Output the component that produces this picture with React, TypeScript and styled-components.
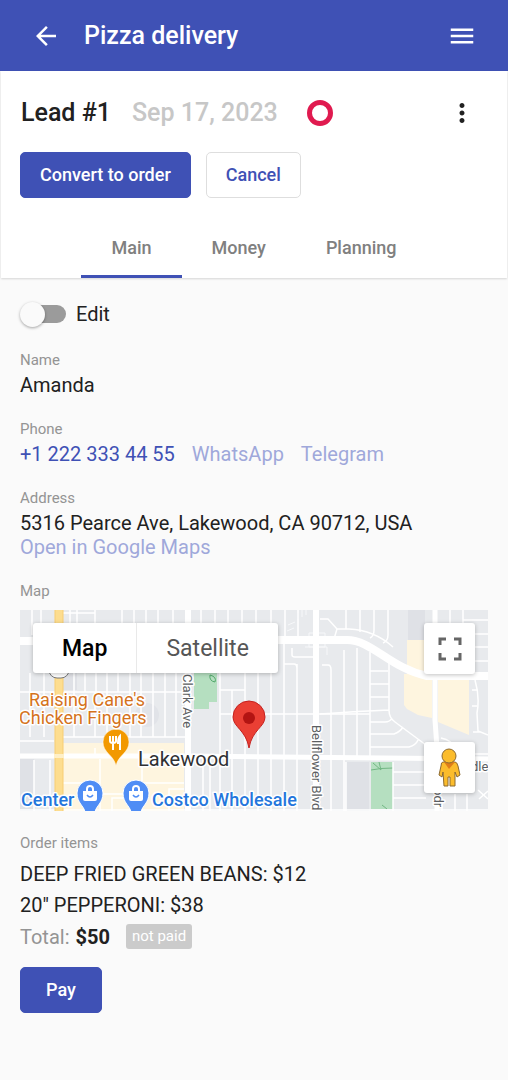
import React, { useState } from "react";
import styled, { createGlobalStyle } from "styled-components";
import { MdArrowBack, MdMenu, MdMoreVert } from "react-icons/md";

const indigo = "#3f51b5";

const GlobalStyle = createGlobalStyle`
  * { box-sizing: border-box; }
  body {
    margin: 0;
    background: #fafafa;
    color: #212121;
    font: 400 20px/24px Roboto, sans-serif;
  }
  button, input { font: inherit; }
`;

const AppBar = styled.header`
  display: flex;
  align-items: center;
  height: 71px;
  padding: 0 31px;
  gap: 23px;
  background: ${indigo};
  color: #fff;
`;

const AppTitle = styled.h1`
  flex: 1;
  margin: 0;
  font-size: 25px;
  line-height: 32px;
  font-weight: 500;
`;

const IconButton = styled.button`
  display: flex;
  padding: 0;
  border: 0;
  background: none;
  color: inherit;
  cursor: pointer;
`;

const LeadPanel = styled.section`
  margin: 0 1px;
  padding-top: 26px;
  background: #fff;
  box-shadow: 0 1px 2px rgba(0, 0, 0, 0.15);
`;

const LeadHeading = styled.div`
  display: flex;
  align-items: center;
  padding: 0 30px 0 20px;
`;

const LeadTitle = styled.h2`
  margin: 0 21px 0 0;
  font-size: 25px;
  line-height: 32px;
  font-weight: 500;
`;

const LeadDate = styled.time`
  font-size: 25px;
  line-height: 32px;
  font-weight: 500;
  color: #c7c7c7;
`;

const StatusRing = styled.span`
  width: 26px;
  height: 26px;
  margin: 0 auto 0 29px;
  border: 5px solid #e01a4f;
  border-radius: 50%;
`;

const Actions = styled.div`
  display: flex;
  gap: 15px;
  padding: 23px 19px 0;
`;

const Button = styled.button<{ $outlined?: boolean; $wide?: boolean }>`
  height: 46px;
  padding: 0 ${(p) => (p.$wide ? 25 : 19)}px 1px;
  border: 1px solid ${(p) => (p.$outlined ? "#dedede" : indigo)};
  border-radius: 5px;
  background: ${(p) => (p.$outlined ? "#fff" : indigo)};
  color: ${(p) => (p.$outlined ? indigo : "#fff")};
  font-size: 18px;
  font-weight: 500;
  cursor: pointer;
`;

const Tabs = styled.div`
  display: flex;
  justify-content: center;
  margin-top: 19px;
`;

const Tab = styled.button<{ $active: boolean }>`
  height: 61px;
  padding: 3px 30px 0;
  border: 0;
  border-bottom: 3px solid ${(p) => (p.$active ? indigo : "transparent")};
  background: none;
  color: #808080;
  font-size: 18px;
  font-weight: 500;
  cursor: pointer;
`;

const Content = styled.main`
  padding: 21px 20px 66px;
`;

const SwitchLabel = styled.label`
  display: flex;
  align-items: center;
  gap: 10px;
  height: 30px;
  margin-bottom: 21px;
  cursor: pointer;
`;

const Switch = styled.input`
  appearance: none;
  display: flex;
  align-items: center;
  width: 36px;
  height: 18px;
  margin: 0 0 0 10px;
  border-radius: 9px;
  background: #9b9b9b;
  cursor: pointer;

  &::before {
    content: "";
    flex: none;
    width: 25px;
    height: 25px;
    margin-left: -10px;
    border-radius: 50%;
    background: #fafafa;
    box-shadow: 0 1px 3px rgba(0, 0, 0, 0.35);
  }
  &:checked { background: #9fa8da; }
  &:checked::before { margin-left: 18px; background: ${indigo}; }
`;

const Field = styled.section`
  margin-bottom: 22px;
`;

const FieldLabel = styled.h3<{ $gap?: number }>`
  margin: 0 0 ${(p) => p.$gap ?? 3}px;
  color: #949494;
  font-size: 15px;
  line-height: 20px;
  font-weight: 400;
`;

const Links = styled.div`
  display: flex;
  flex-wrap: wrap;
  gap: 0 17px;
`;

const Link = styled.a<{ $soft?: boolean }>`
  color: ${(p) => (p.$soft ? "#9fa8da" : indigo)};
  text-decoration: none;
`;

const MapFrame = styled.div`
  position: relative;
  height: 201px;
  overflow: hidden;
  background: #e8eaed;
`;

const MapArt = styled.svg`
  display: block;
  width: 100%;
  height: 100%;
  font-family: Roboto, sans-serif;
`;

const MapTypes = styled.div`
  position: absolute;
  top: 13px;
  left: 13px;
  display: flex;
  border-radius: 3px;
  background: #fff;
  box-shadow: 0 1px 4px rgba(0, 0, 0, 0.25);
`;

const MapType = styled.button<{ $active?: boolean }>`
  height: 50px;
  padding: 2px 29px 0;
  border: 0;
  background: none;
  color: ${(p) => (p.$active ? "#000" : "#565656")};
  font-size: 23px;
  font-weight: ${(p) => (p.$active ? 500 : 400)};
  cursor: pointer;

  & + & { border-left: 1px solid #e9e9e9; }
`;

const MapTools = styled.div`
  position: absolute;
  top: 13px;
  right: 13px;
  display: flex;
  flex-direction: column;
  gap: 68px;
`;

const MapTool = styled.button`
  display: flex;
  align-items: center;
  justify-content: center;
  width: 51px;
  height: 51px;
  padding: 0;
  border: 0;
  border-radius: 3px;
  background: #fff;
  box-shadow: 0 1px 4px rgba(0, 0, 0, 0.25);
  cursor: pointer;
`;

const Items = styled.ul`
  margin: 0;
  padding: 0;
  list-style: none;
  line-height: 31px;
`;

const Total = styled.div`
  display: flex;
  align-items: center;
  height: 31px;
  margin-bottom: 15px;
  color: #949494;
`;

const Amount = styled.strong`
  margin: 0 16px 0 6px;
  color: #212121;
  font-weight: 700;
`;

const Badge = styled.span`
  height: 25px;
  padding: 0 6px;
  border-radius: 3px;
  background: #cbcbcb;
  color: #fff;
  font-size: 15px;
  line-height: 25px;
`;

function ShopPin({ x }: { x: number }) {
  return (
    <g transform={`translate(${x} 184)`}>
      <path d="M-5 18C-6 12-13 9-13-1A13 13 0 0 1 13-1C13 9 6 12 5 18Z" fill="#4f8df5" stroke="#fff" />
      <path d="M-7-3H7V5Q7 7 5 7H-5Q-7 7-7 5Z" fill="#fff" />
      <path d="M-3-3V-5A3 3 0 0 1 3-5V-3" fill="none" stroke="#fff" strokeWidth="2" />
      <path d="M-3 1Q0 5 3 1" fill="none" stroke="#4f8df5" strokeWidth="1.5" />
    </g>
  );
}

function StreetMap() {
  return (
    <MapArt viewBox="0 0 468 201" preserveAspectRatio="xMidYMid slice" role="img" aria-label="Street map of Lakewood">
      <rect width="468" height="201" fill="#e8eaed" />
      <path d="M388 0H405V30H388ZM326 152H349V201H326ZM43 59H57V80H43ZM0 149H14V201H0Z" fill="#dfe1e6" />
      <circle cx="127" cy="105" r="12" fill="#e1e3e8" />
      <path d="M43 133H164V201H43ZM387 30H412V108L398 105L387 99L384 95V64H387ZM418 70H449V125L418 112Z" fill="#fef5df" />
      <path d="M174 63H197V92H189V99H174ZM351 152H373V199H351Z" fill="#b5dfc0" />
      <path d="M351 160Q360 158 373 158M353 153L361 160L359 152M362 195L367 199" fill="none" stroke="#72b784" />
      <path d="M190 65Q197 67 195 72Q189 71 190 65Z" fill="none" stroke="#51a86a" />

      <g fill="none" stroke="#fff" strokeWidth="1.5">
        <path d="M12 0V25M21 0V25M50 0V25M57 0V25M75 0V25M43 3H75M10 63V127M24 63V127M54 63V82M65 63V82M76 63V82M87 63V82M98 63V82M110 63V127M121 63V127M133 63V127M145 63V127M156 63V127M0 82H168M43 127H168M75 82V127M54 82V127M87 82V127M0 131H34" />
        <path d="M102 0V25M114 0V25M126 0V25M138 0V25M153 0V25M181 0V30M195 0V30M208 0V30M222 0V30M236 0V30M251 0V30M265 0V30M278 0V30" />
        <path d="M200 63V201M212 80V201M225 63V201M238 63V201M251 63V201M264 30V201M277 54V201M200 80H225M200 104H350M264 54H274Q277 54 277 59M272 38V45Q272 47 275 47H293M183 149V201M190 149V201" />
        <path d="M302 55H308Q311 55 311 60V201M324 40V201M337 38V147M350 42V147M300 9H308L317 19L314 29M326 0V19M340 0V22M354 0V20Q354 26 350 28M368 0V25Q368 31 363 33M317 19H329Q354 20 373 37M300 104Q340 101 369 100M350 61H368M350 74H369M350 87H369M350 112H365Q370 112 372 108M350 124H374Q380 122 383 117M350 137H389Q396 135 398 130M369 50V100Q369 108 375 112L410 138" />
        <path d="M373 152V201M373 162H406M373 175H406M373 188H406M326 152V201M422 190V201M435 184V201M447 184V201M430 0V13M443 0V13M443 10H468M454 24H468M454 37H468M454 51H468M455 70Q460 87 457 103L458 121L468 125M453 122H460M421 128Q432 130 437 140M455 144H468M458 180L468 189M468 181L459 189M452 80H457M452 96H457" />
        <path d="M80 149V173H43M80 173V184H122M122 140V173H164M80 184V201M122 173V201M92 201V188H105M149 201V179H164M75 144V138M14 150V201M30 150V201" />
        <path d="M0 200H468" />
      </g>
      <path d="M289 23H305V37H289ZM285 37H307V45M294 23V45M268 15L275 12M267 21L274 18M278 3V9M282 0V7M286 0V5" fill="none" stroke="#f7f8fa" />

      <g fill="none" stroke="#fff">
        <path d="M0 146H164L468 149" strokeWidth="5" />
        <path d="M0 31H14" strokeWidth="8" />
        <path d="M168 0V201M296 0V201" strokeWidth="6" />
        <path d="M415 0V68V110L417 138V201" strokeWidth="5" />
        <path d="M257 30H327C352 30 370 58 407 66H468" strokeWidth="8" />
      </g>
      <path d="M39 0V201" fill="none" stroke="#f7cd72" strokeWidth="9" />
      <path d="M39 0V201" fill="none" stroke="#fddd8f" strokeWidth="7" />
      <path d="M34 146H44" fill="none" stroke="#fff0c8" strokeWidth="4" />
      <rect x="29" y="50" width="20" height="18" rx="8" fill="#fff" stroke="#777" />

      <g transform="translate(96 131)">
        <path d="M0 25C-2 14-13 12-13 1A13 13 0 0 1 13 1C13 12 2 14 0 25Z" fill="#f29900" stroke="#fff" strokeWidth=".5" />
        <path d="M-6-5V0Q-6 2-3 2Q0 2 0 0V-5M-3-5V9M4 9V-5Q2-3 2 2H4" fill="none" stroke="#fff" strokeWidth="2" />
      </g>
      <ShopPin x={70} />
      <ShopPin x={116} />

      <g stroke="#fff" strokeWidth="3" strokeLinejoin="round" paintOrder="stroke" fontSize="18">
        <g fill="#d5731c">
          <text x="9" y="96">Raising Cane's</text>
          <text x="-1" y="114">Chicken Fingers</text>
        </g>
        <text x="118" y="156" fontSize="20" fill="#303134">Lakewood</text>
        <g fill="#2476dc" fontWeight="500">
          <text x="1" y="196">Center</text>
          <text x="132" y="196">Costco Wholesale</text>
        </g>
        <g fill="#5b5e62" fontSize="13">
          <text transform="translate(163 64) rotate(90)">Clark Ave</text>
          <text transform="translate(292 115) rotate(90)">Bellflower Blvd</text>
          <text transform="translate(414 178) rotate(90)">odr</text>
          <text x="451" y="161">dle</text>
        </g>
      </g>

      <path d="M229 138C226 120 213 117 213 107A16 16 0 0 1 245 107C245 117 232 120 229 138Z" fill="#ea3f34" stroke="#c5221f" />
      <circle cx="229" cy="108" r="6" fill="#b31412" />
    </MapArt>
  );
}

function FullscreenIcon() {
  return (
    <svg width="24" height="24" viewBox="0 0 24 24" fill="none" stroke="#666" strokeWidth="3" aria-hidden="true">
      <path d="M2 8V2H8M16 2H22V8M22 16V22H16M8 22H2V16" />
    </svg>
  );
}

function PegmanIcon() {
  return (
    <svg width="23" height="40" viewBox="0 0 23 40" fill="#fbbc2c" stroke="#8c6a32" aria-hidden="true">
      <path d="M5 14H17Q19 14 20 18L22 27L19 29L17 24V38H12V29H10V38H6L5 24L4 29L1 27L3 18Q3 14 5 14Z" />
      <path d="M6 14H17L11 21Z" fill="#df7d19" stroke="none" />
      <circle cx="11" cy="8" r="7" />
    </svg>
  );
}

const tabs = ["Main", "Money", "Planning"];
const items = ["DEEP FRIED GREEN BEANS: $12", '20" PEPPERONI: $38'];

export default function App() {
  const [tab, setTab] = useState("Main");
  return (
    <>
      <GlobalStyle />
      <AppBar>
        <IconButton aria-label="Back"><MdArrowBack size={30} /></IconButton>
        <AppTitle>Pizza delivery</AppTitle>
        <IconButton aria-label="Menu"><MdMenu size={30} /></IconButton>
      </AppBar>
      <LeadPanel>
        <LeadHeading>
          <LeadTitle>Lead #1</LeadTitle>
          <LeadDate dateTime="2023-09-17">Sep 17, 2023</LeadDate>
          <StatusRing />
          <IconButton aria-label="More actions"><MdMoreVert size={30} /></IconButton>
        </LeadHeading>
        <Actions>
          <Button>Convert to order</Button>
          <Button $outlined>Cancel</Button>
        </Actions>
        <Tabs role="tablist">
          {tabs.map((name) => (
            <Tab key={name} role="tab" aria-selected={tab === name} $active={tab === name} onClick={() => setTab(name)}>
              {name}
            </Tab>
          ))}
        </Tabs>
      </LeadPanel>
      <Content>
        <SwitchLabel>
          <Switch type="checkbox" role="switch" />
          Edit
        </SwitchLabel>
        <Field>
          <FieldLabel>Name</FieldLabel>
          <div>Amanda</div>
        </Field>
        <Field>
          <FieldLabel>Phone</FieldLabel>
          <Links>
            <Link href="tel:+12223334455">+1 222 333 44 55</Link>
            <Link $soft href="#whatsapp">WhatsApp</Link>
            <Link $soft href="#telegram">Telegram</Link>
          </Links>
        </Field>
        <Field>
          <FieldLabel>Address</FieldLabel>
          <div>5316 Pearce Ave, Lakewood, CA 90712, USA</div>
          <Links>
            <Link $soft href="#map">Open in Google Maps</Link>
          </Links>
        </Field>
        <Field id="map">
          <FieldLabel $gap={9}>Map</FieldLabel>
          <MapFrame>
            <StreetMap />
            <MapTypes>
              <MapType $active>Map</MapType>
              <MapType>Satellite</MapType>
            </MapTypes>
            <MapTools>
              <MapTool aria-label="Toggle fullscreen"><FullscreenIcon /></MapTool>
              <MapTool aria-label="Street view"><PegmanIcon /></MapTool>
            </MapTools>
          </MapFrame>
        </Field>
        <section>
          <FieldLabel $gap={6}>Order items</FieldLabel>
          <Items>
            {items.map((item) => <li key={item}>{item}</li>)}
          </Items>
          <Total>
            Total: <Amount>$50</Amount>
            <Badge>not paid</Badge>
          </Total>
          <Button $wide>Pay</Button>
        </section>
      </Content>
    </>
  );
}
